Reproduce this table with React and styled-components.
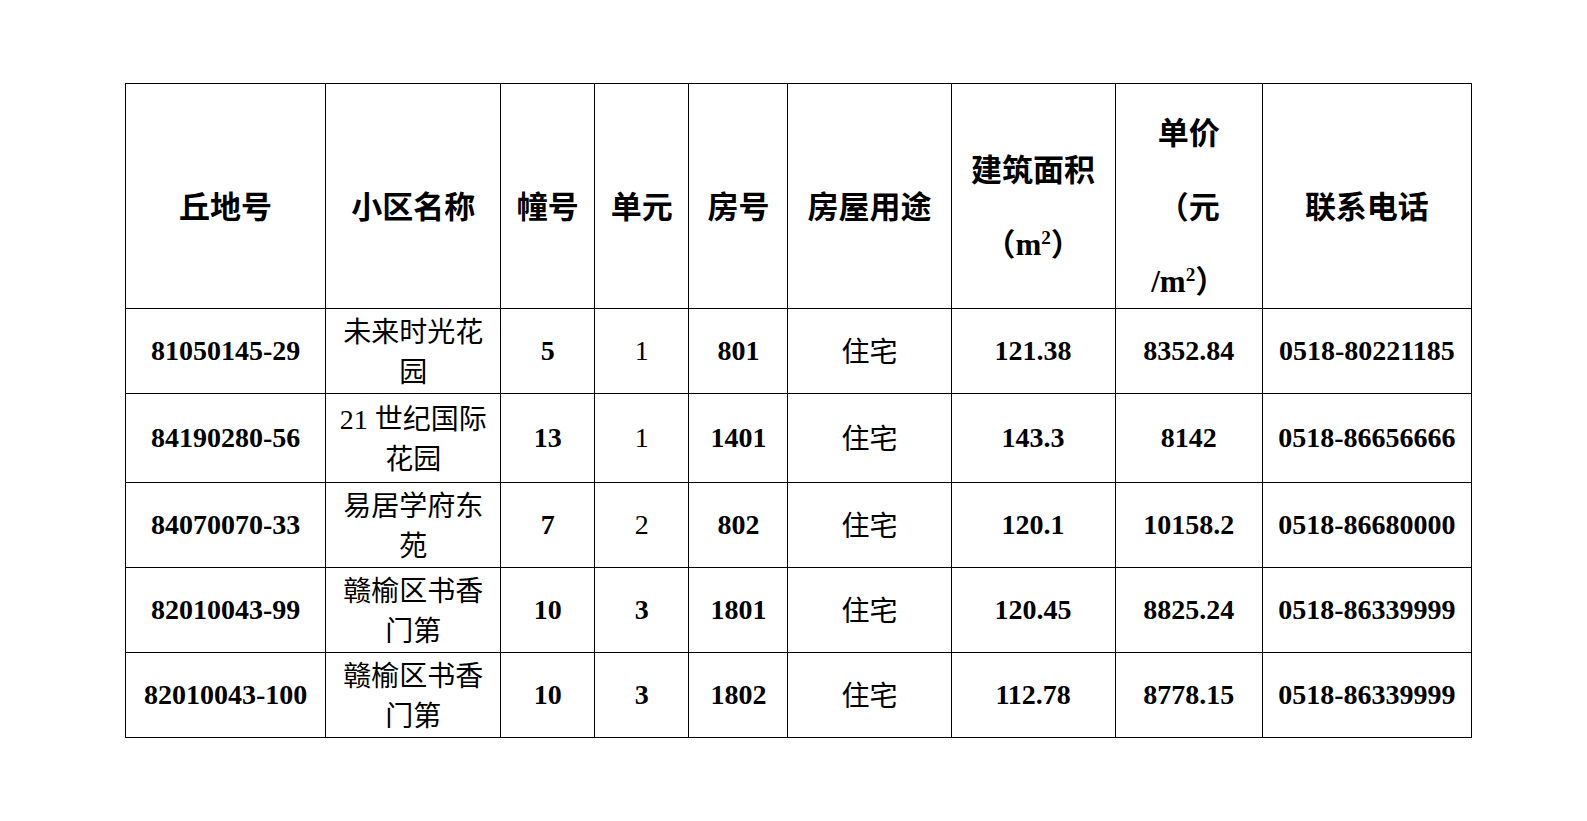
import React from "react";
import styled, { createGlobalStyle } from "styled-components";

const GlobalStyle = createGlobalStyle`
  html, body {
    margin: 0;
    padding: 0;
    background: #fff;
  }
  body {
    font-family: "Liberation Serif", "Noto Sans CJK SC", serif;
    color: #000;
  }
`;

const Page = styled.div`
  padding: 83px 0 0 125px;
`;

const Table = styled.table`
  border-collapse: collapse;
  table-layout: fixed;
  width: 1347px;
`;

const HeadCell = styled.th`
  border: 1px solid #000;
  padding: 0;
  height: 224px;
  text-align: center;
  vertical-align: middle;
  font-family: "Liberation Serif", "Noto Sans CJK SC", sans-serif;
  font-size: 31px;
  font-weight: 700;
`;

const HeadLine = styled.span`
  display: block;
  padding-top: 24px;
  line-height: 50px;
  white-space: nowrap;
`;

const Sup = styled.sup`
  font-size: 0.62em;
  line-height: 0;
  vertical-align: 0.55em;
`;

const Row = styled.tr`
  height: ${({ $h }) => $h}px;
`;

const Cell = styled.td`
  border: 1px solid #000;
  padding: ${({ $cjk }) => ($cjk ? "4px 0 0" : "0")};
  text-align: center;
  vertical-align: middle;
  font-size: 28px;
  line-height: 40px;
  font-weight: ${({ $bold }) => ($bold ? 700 : 400)};
  font-family: "Liberation Serif", "Noto Sans CJK SC", serif;
  white-space: nowrap;
`;

const widths = [200, 175, 94, 94, 99, 163, 164, 147, 209];

const rows = [
  {
    id: "81050145-29",
    name: ["未来时光花", "园"],
    bld: "5",
    unit: "1",
    unitBold: false,
    room: "801",
    area: "121.38",
    price: "8352.84",
    tel: "0518-80221185",
    h: 85,
  },
  {
    id: "84190280-56",
    name: ["21 世纪国际", "花园"],
    bld: "13",
    unit: "1",
    unitBold: false,
    room: "1401",
    area: "143.3",
    price: "8142",
    tel: "0518-86656666",
    h: 89,
  },
  {
    id: "84070070-33",
    name: ["易居学府东", "苑"],
    bld: "7",
    unit: "2",
    unitBold: false,
    room: "802",
    area: "120.1",
    price: "10158.2",
    tel: "0518-86680000",
    h: 85,
  },
  {
    id: "82010043-99",
    name: ["赣榆区书香", "门第"],
    bld: "10",
    unit: "3",
    unitBold: true,
    room: "1801",
    area: "120.45",
    price: "8825.24",
    tel: "0518-86339999",
    h: 84,
  },
  {
    id: "82010043-100",
    name: ["赣榆区书香", "门第"],
    bld: "10",
    unit: "3",
    unitBold: true,
    room: "1802",
    area: "112.78",
    price: "8778.15",
    tel: "0518-86339999",
    h: 85,
  },
];

const headers = [
  ["丘地号"],
  ["小区名称"],
  ["幢号"],
  ["单元"],
  ["房号"],
  ["房屋用途"],
  [
    "建筑面积",
    <>
      （m<Sup>2</Sup>）
    </>,
  ],
  [
    "单价",
    "（元",
    <>
      /m<Sup>2</Sup>）
    </>,
  ],
  ["联系电话"],
];

export default function App() {
  return (
    <>
      <GlobalStyle />
      <Page>
        <Table>
          <colgroup>
            {widths.map((w, i) => (
              <col key={i} style={{ width: w }} />
            ))}
          </colgroup>
          <thead>
            <tr>
              {headers.map((lines, i) => (
                <HeadCell key={i}>
                  {lines.map((l, j) => (
                    <HeadLine key={j}>{l}</HeadLine>
                  ))}
                </HeadCell>
              ))}
            </tr>
          </thead>
          <tbody>
            {rows.map((r) => (
              <Row key={r.id} $h={r.h}>
                <Cell $bold>{r.id}</Cell>
                <Cell $cjk>
                  {r.name[0]}
                  <br />
                  {r.name[1]}
                </Cell>
                <Cell $bold>{r.bld}</Cell>
                <Cell $bold={r.unitBold}>{r.unit}</Cell>
                <Cell $bold>{r.room}</Cell>
                <Cell $cjk>住宅</Cell>
                <Cell $bold>{r.area}</Cell>
                <Cell $bold>{r.price}</Cell>
                <Cell $bold>{r.tel}</Cell>
              </Row>
            ))}
          </tbody>
        </Table>
      </Page>
    </>
  );
}
